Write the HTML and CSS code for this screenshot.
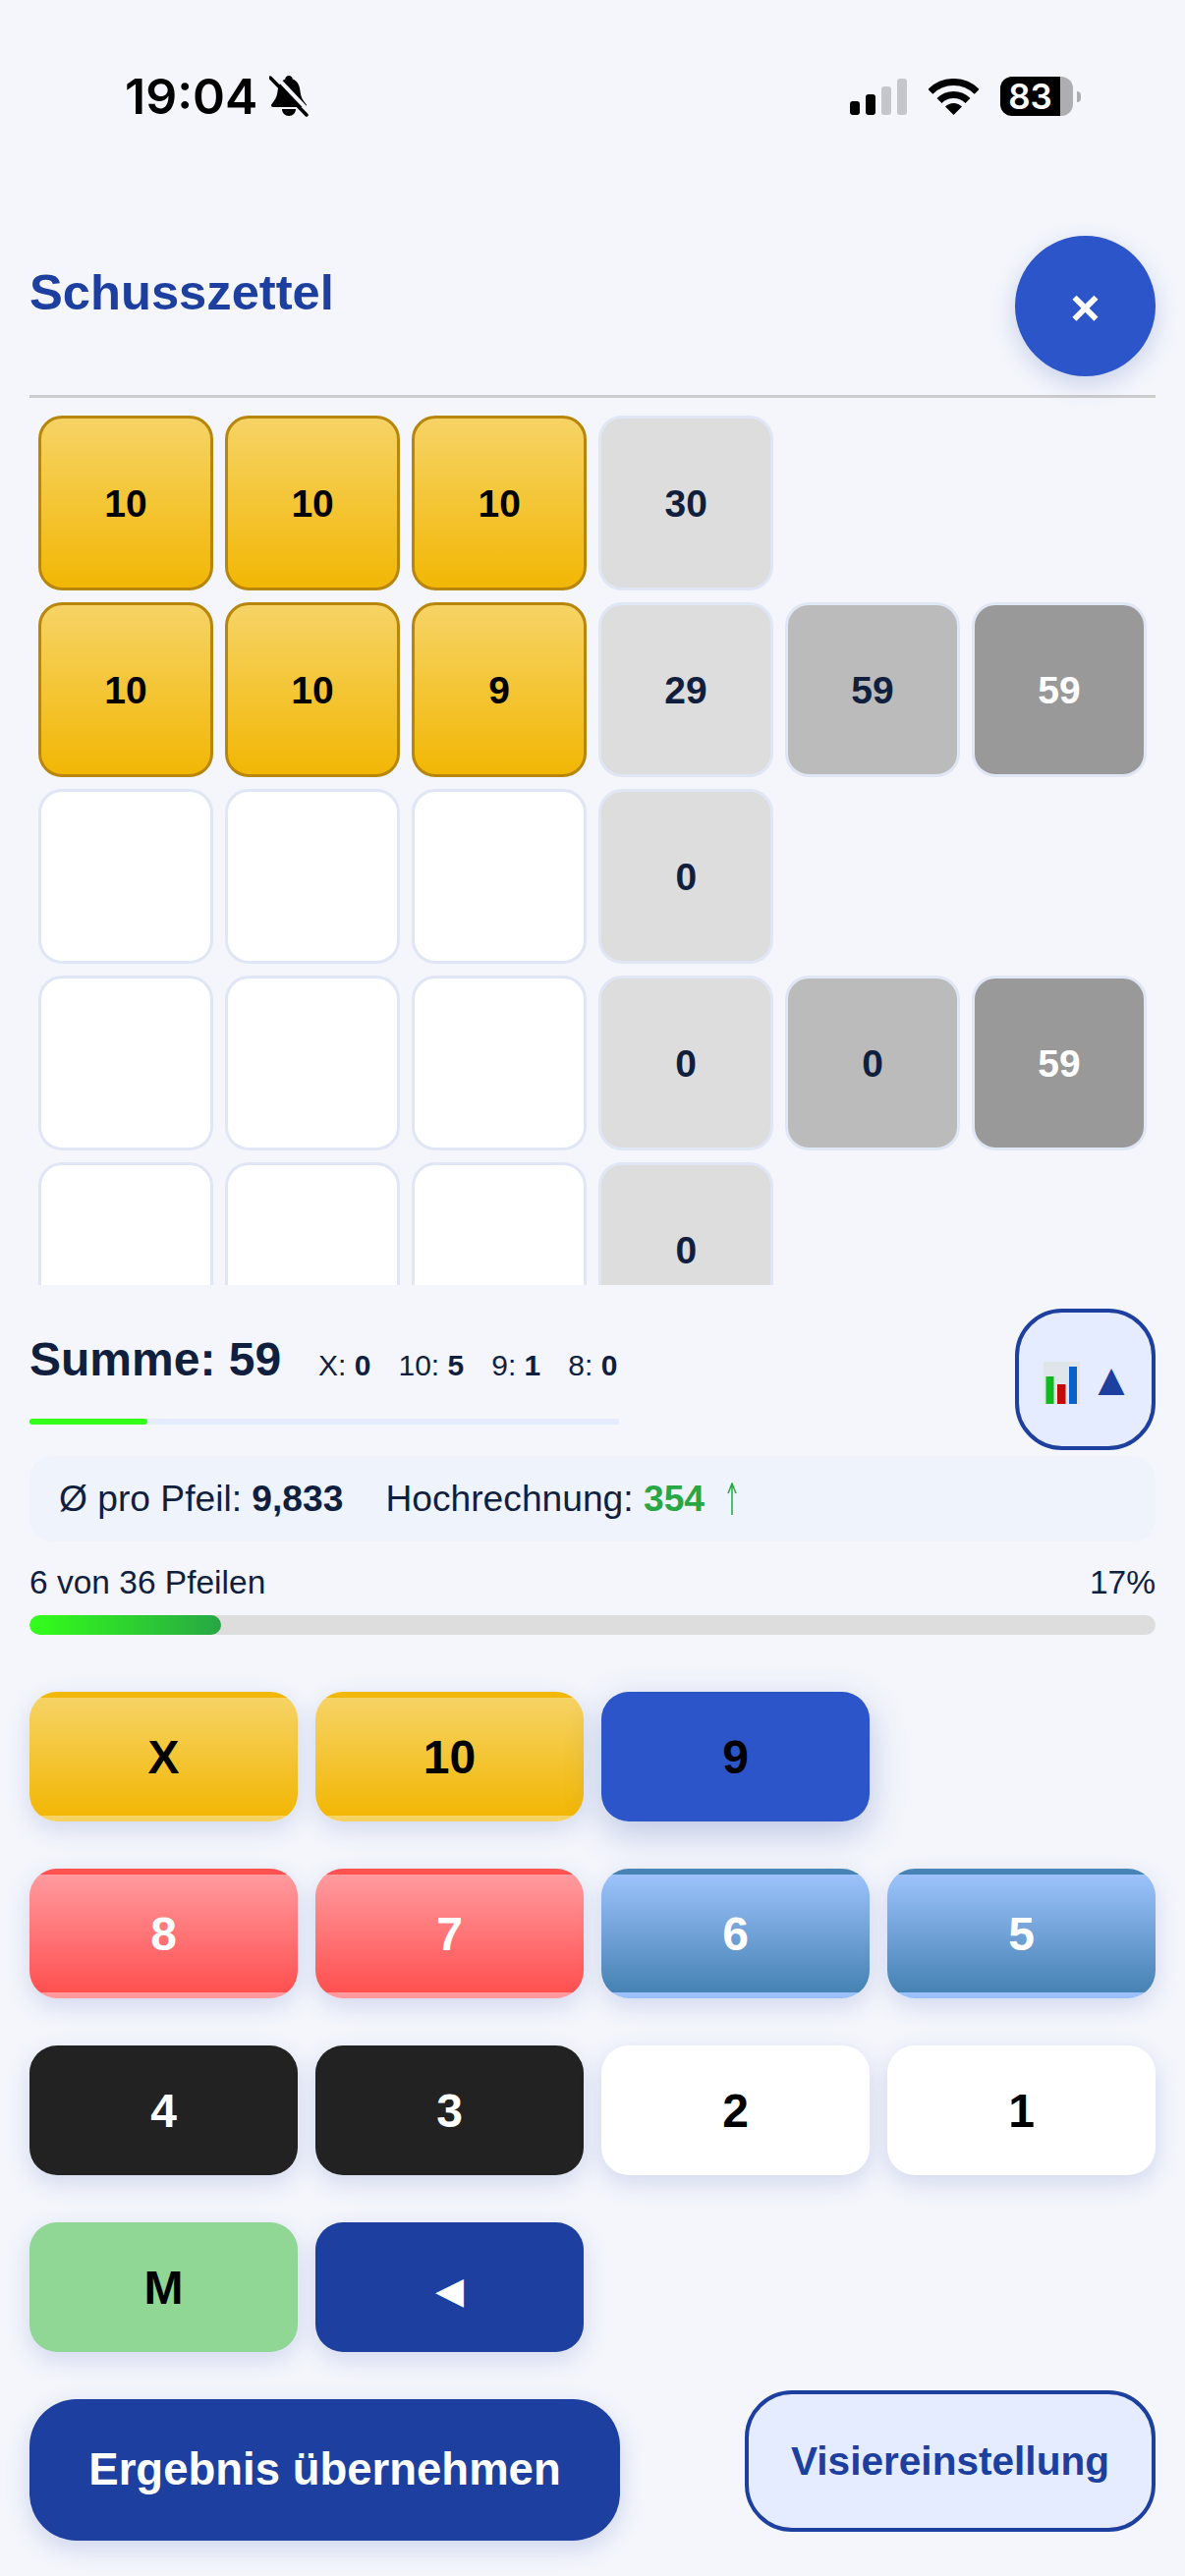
FILE: index.html
```html
<!DOCTYPE html>
<html lang="de">
<head>
    <meta charset="UTF-8">
    <meta name="viewport" content="width=device-width, initial-scale=1.0">
    <title>Schusszettel</title>
    <link rel="stylesheet" href="styles.css">
</head>
<body>
    <!-- Statusleiste -->
    <div class="statusbar">
        <div class="status-left">
            <span class="time">19:04</span>
            <svg class="bell" width="40" height="42" viewBox="0 0 40 42">
                <path d="M20 0c2 0 3.500 1.500 3.800 3.500C29 5.500 31 10 31.500 16c.4 5 2.500 9 6 13 1 1.200.5 3-1.500 3H4c-2 0-2.500-1.800-1.500-3 3-3.500 5-7 5.800-11.500C9.200 11 11 5.500 16.200 3.500 16.500 1.500 18 0 20 0z"/>
                <path d="M13 34h14c0 4-3 7-7 7s-7-3-7-7z"/>
                <path d="M6 0L42 38" stroke="#f4f6fc" stroke-width="4" fill="none"/>
                <path d="M1 2L38 40" stroke="#000" stroke-width="3.500" stroke-linecap="round" fill="none"/>
            </svg>
        </div>
        <div class="status-right">
            <div class="signal"><span></span><span></span><span class="off"></span><span class="off"></span></div>
            <svg class="wifi" width="51" height="37" viewBox="0 0 51 37">
                <path d="M1.800 13.300A33.500 33.500 0 0 1 49.200 13.300" fill="none" stroke="#000" stroke-width="7"/>
                <path d="M11 22.500A20.500 20.500 0 0 1 40 22.500" fill="none" stroke="#000" stroke-width="7"/>
                <path d="M25.500 37L17 28.500A12 12 0 0 1 34 28.500z"/>
            </svg>
            <div class="battery-wrap">
                <div class="battery">83</div>
                <div class="battery-tip"></div>
            </div>
        </div>
    </div>

    <div class="page">
        <!-- Kopf -->
        <div class="head">
            <h2 class="title">Schusszettel</h2>
            <button class="close-btn">×</button>
        </div>

        <!-- Schusszettel Tabelle -->
        <div class="sheet">
            <div class="sheet-row">
                <div class="cell gold">10</div>
                <div class="cell gold">10</div>
                <div class="cell gold">10</div>
                <div class="cell sum">30</div>
            </div>
            <div class="sheet-row">
                <div class="cell gold">10</div>
                <div class="cell gold">10</div>
                <div class="cell gold">9</div>
                <div class="cell sum">29</div>
                <div class="cell sum2">59</div>
                <div class="cell sum3">59</div>
            </div>
            <div class="sheet-row">
                <div class="cell"></div>
                <div class="cell"></div>
                <div class="cell"></div>
                <div class="cell sum">0</div>
            </div>
            <div class="sheet-row">
                <div class="cell"></div>
                <div class="cell"></div>
                <div class="cell"></div>
                <div class="cell sum">0</div>
                <div class="cell sum2">0</div>
                <div class="cell sum3">59</div>
            </div>
            <div class="sheet-row">
                <div class="cell"></div>
                <div class="cell"></div>
                <div class="cell"></div>
                <div class="cell sum">0</div>
            </div>
        </div>

        <!-- Summe -->
        <div class="summary">
            <div class="summary-left">
                <div class="summary-line">
                    <span class="summe">Summe: 59</span>
                    <span class="stat">X: <b>0</b></span>
                    <span class="stat">10: <b>5</b></span>
                    <span class="stat">9: <b>1</b></span>
                    <span class="stat">8: <b>0</b></span>
                </div>
                <div class="mini-bar"><div class="mini-fill" style="width: 20%"></div></div>
            </div>
            <button class="chart-btn">
                <svg class="chart-icon" width="37" height="43" viewBox="0 0 37 43">
                    <rect width="37" height="43" fill="#dfe5e9"/>
                    <rect x="2.500" y="15" width="8" height="28" fill="#0cbc1c"/>
                    <rect x="14" y="23" width="8.500" height="20" fill="#c40808"/>
                    <rect x="26" y="5" width="8" height="38" fill="#0a62c8"/>
                </svg>
                <span class="chart-arrow">▲</span>
            </button>
        </div>

        <div class="info">
            <span>Ø pro Pfeil: <b>9,833</b></span>
            <span>Hochrechnung: <b class="green">354</b></span>
            <svg class="trend" width="14" height="34" viewBox="0 0 14 34">
                <path d="M7 33V2M3 11L7 1l4 10" fill="none" stroke="#28a745" stroke-width="1.500"/>
            </svg>
        </div>

        <div class="progress-label">
            <span>6 von 36 Pfeilen</span>
            <span>17%</span>
        </div>
        <div class="progress-bar"><div class="progress-fill" style="width: 17%"></div></div>

        <!-- Tastenfeld -->
        <div class="keypad">
            <button class="key k-gold">X</button>
            <button class="key k-gold">10</button>
            <button class="key k-active">9</button>
            <button class="key k-red new-row">8</button>
            <button class="key k-red">7</button>
            <button class="key k-blue">6</button>
            <button class="key k-blue">5</button>
            <button class="key k-black">4</button>
            <button class="key k-black">3</button>
            <button class="key k-white">2</button>
            <button class="key k-white">1</button>
            <button class="key k-miss">M</button>
            <button class="key k-back">◄</button>
        </div>

        <div class="actions">
            <button class="btn-submit">Ergebnis übernehmen</button>
            <button class="btn-sight">Visiereinstellung</button>
        </div>
    </div>
</body>
</html>
```

FILE: styles.css
```css
/* Allgemein */
* {
    box-sizing: border-box;
}

body {
    margin: 0;
    width: 1206px;
    height: 2622px;
    overflow: hidden;
    background-color: #f4f6fc;
    color: #111f3f;
    font-family: "Liberation Sans", Arial, sans-serif;
}

button {
    font-family: inherit;
    cursor: pointer;
}

/* Statusleiste */
.statusbar {
    display: flex;
    justify-content: space-between;
    align-items: center;
    height: 42px;
    margin-top: 77px;
    padding: 0 106px 0 127px;
    color: #000;
}

.status-left {
    display: flex;
    align-items: center;
    gap: 12px;
}

.time {
    font-family: Inter, sans-serif;
    font-size: 50px;
    font-weight: 600;
    line-height: 42px;
}

.status-right {
    display: flex;
    align-items: center;
    gap: 22px;
}

.signal {
    display: flex;
    align-items: flex-end;
    gap: 6px;
    height: 37px;
}

.signal span {
    width: 10px;
    border-radius: 3px;
    background-color: #000;
}

.signal span:nth-child(1) { height: 14px; }
.signal span:nth-child(2) { height: 21px; }
.signal span:nth-child(3) { height: 29px; }
.signal span:nth-child(4) { height: 37px; }

.signal span.off {
    background-color: #c4c6cc;
}

.battery-wrap {
    display: flex;
    align-items: center;
    gap: 4px;
}

.battery {
    width: 74px;
    height: 40px;
    padding-right: 13px;
    border-radius: 12px;
    background: linear-gradient(90deg, #000 82.500%, #aeaeb2 82.500%);
    color: #fff;
    font-family: Inter, sans-serif;
    font-size: 35px;
    font-weight: 600;
    line-height: 40px;
    text-align: center;
}

.battery-tip {
    width: 4px;
    height: 11px;
    border-radius: 0 6px 6px 0;
    background-color: #aeaeb2;
}

/* Seite */
.page {
    padding: 0 30px;
}

.head {
    display: flex;
    justify-content: space-between;
    align-items: flex-start;
    margin-top: 121px;
    padding-bottom: 19px;
    border-bottom: 3px solid #ccc;
}

.title {
    margin: 29px 0 0;
    color: #1c3fa0;
    font-size: 50.700px;
    font-weight: bold;
    line-height: 57px;
}

.close-btn {
    width: 143px;
    height: 143px;
    padding: 3px 0 0;
    border: none;
    border-radius: 50%;
    background-color: #2b55c8;
    box-shadow: 0 8px 24px rgba(28, 63, 160, 0.2);
    color: #fff;
    font-size: 52px;
    font-weight: bold;
}

/* Tabelle */
.sheet {
    display: flex;
    flex-direction: column;
    gap: 12px;
    height: 903px;
    padding: 18px 9px 0;
    overflow: hidden;
}

.sheet-row {
    display: flex;
    flex-shrink: 0;
    gap: 12.100px;
}

.cell {
    display: flex;
    justify-content: center;
    align-items: center;
    width: 178px;
    height: 178px;
    padding-top: 2px;
    border: 3px solid #e0e6f5;
    border-radius: 24px;
    background-color: #fff;
    font-size: 39px;
    font-weight: bold;
}

.gold {
    border-color: #b8860b;
    background: linear-gradient(180deg, #f6d365, #f2b705);
    color: #000;
}

.sum {
    background-color: #ddd;
}

.sum2 {
    background-color: #bbb;
}

.sum3 {
    background-color: #999;
    color: #fff;
}

/* Summe */
.summary {
    display: flex;
    justify-content: space-between;
    margin-top: 24px;
}

.summary-left {
    width: 600px;
    padding-top: 24px;
}

.summary-line {
    display: flex;
    align-items: baseline;
    gap: 28px;
    line-height: 55px;
}

.summe {
    margin-right: 10px;
    font-size: 48px;
    font-weight: bold;
}

.stat {
    font-size: 30px;
}

.mini-bar {
    height: 6px;
    margin-top: 27px;
    background-color: #e6ecff;
}

.mini-fill {
    height: 100%;
    border-radius: 3px;
    background-color: #33ff1a;
}

.chart-btn {
    display: flex;
    justify-content: center;
    align-items: center;
    gap: 9px;
    width: 143px;
    height: 144px;
    padding: 0 0 0 7px;
    border: 4px solid #1c3fa0;
    border-radius: 48px;
    background-color: #e6ecff;
}

.chart-icon {
    margin-top: 7px;
}

.chart-arrow {
    color: #1c3fa0;
    font-size: 46px;
    line-height: 1;
}

/* Info */
.info {
    display: flex;
    align-items: center;
    gap: 43px;
    height: 87px;
    margin-top: 6px;
    padding-left: 30px;
    border-radius: 24px;
    background-color: #eff3fc;
    font-size: 37.200px;
}

.green {
    color: #28a745;
}

.trend {
    margin-left: -22px;
}

.progress-label {
    display: flex;
    justify-content: space-between;
    margin-top: 23px;
    font-size: 33.500px;
    line-height: 38px;
}

.progress-bar {
    height: 20px;
    margin-top: 14px;
    border-radius: 10px;
    background-color: #ddd;
    overflow: hidden;
}

.progress-fill {
    height: 100%;
    border-radius: 10px;
    background: linear-gradient(90deg, #33ff1a, #28a745);
}

/* Tastenfeld */
.keypad {
    display: grid;
    grid-template-columns: repeat(4, 273px);
    grid-auto-rows: 132px;
    gap: 48px 18px;
    margin-top: 58px;
}

.key {
    padding: 0;
    border: 6px solid transparent;
    border-radius: 28px;
    box-shadow: 0 8px 24px rgba(28, 63, 160, 0.16);
    font-size: 48px;
    font-weight: bold;
}

.new-row {
    grid-column: 1;
}

.k-gold {
    background: linear-gradient(180deg, #f6d365, #f2b705);
    color: #000;
}

.k-active {
    background: #2b55c8;
    box-shadow: 0 12px 36px rgba(28, 63, 160, 0.26);
    color: #000;
}

.k-red {
    background: linear-gradient(180deg, #ff9a9e, #ff5050);
    color: #fff;
}

.k-blue {
    background: linear-gradient(180deg, #9cc2fc, #4682b4);
    color: #fff;
}

.k-black {
    background: #222;
    color: #fff;
}

.k-white {
    background: #fff;
    color: #000;
}

.k-miss {
    background: #90d795;
    color: #000;
}

.k-back {
    padding-top: 6px;
    background: #1c3fa0;
    color: #fff;
}

/* Aktionen */
.actions {
    display: flex;
    justify-content: space-between;
    align-items: flex-start;
    margin-top: 39px;
}

.btn-submit {
    width: 601px;
    height: 144px;
    margin-top: 9px;
    border: none;
    border-radius: 48px;
    background-color: #1c3fa0;
    box-shadow: 0 8px 24px rgba(28, 63, 160, 0.18);
    color: #fff;
    font-size: 45.500px;
    font-weight: bold;
}

.btn-sight {
    width: 418px;
    height: 144px;
    padding: 0;
    border: 4px solid #1c3fa0;
    border-radius: 48px;
    background-color: #e6ecff;
    color: #1c3fa0;
    font-size: 40.600px;
    font-weight: bold;
}
```
